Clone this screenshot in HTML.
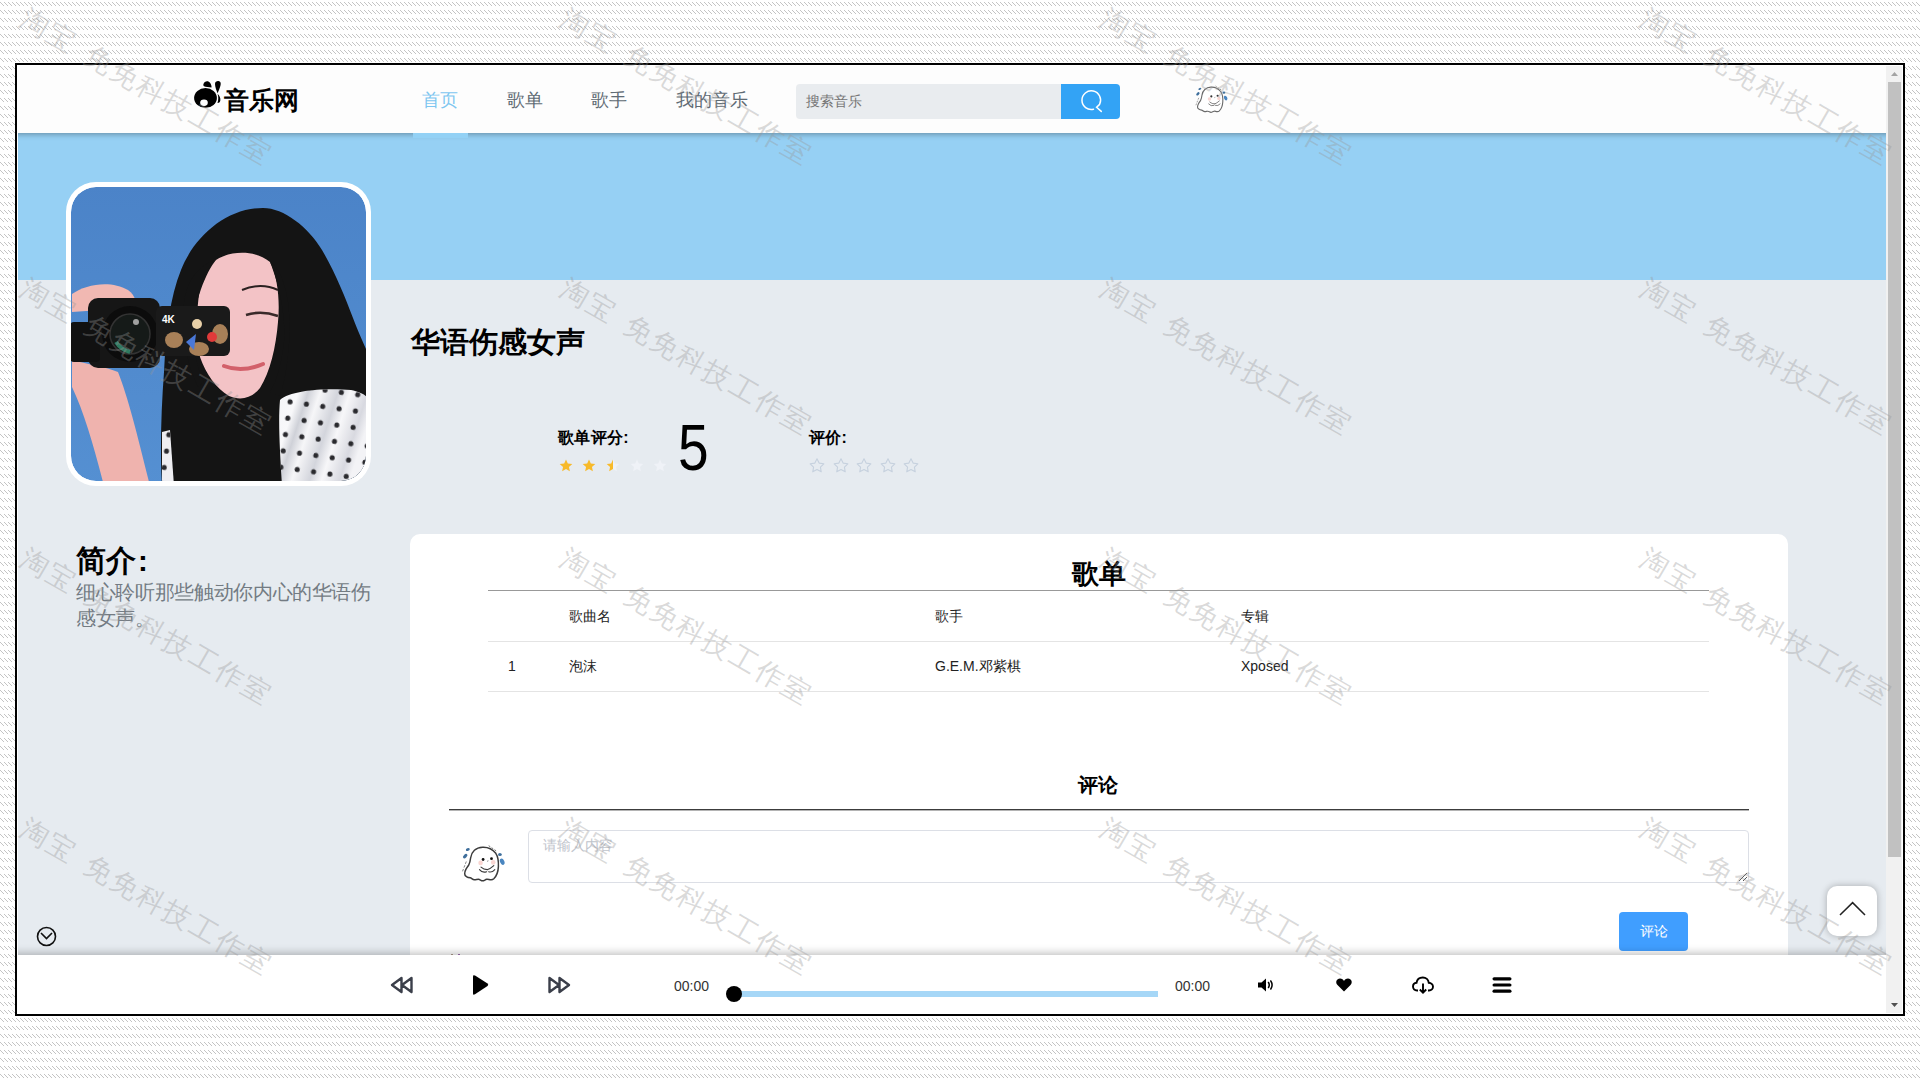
<!DOCTYPE html>
<html><head><meta charset="utf-8">
<style>
*{box-sizing:border-box;margin:0;padding:0}
html,body{width:1920px;height:1080px;overflow:hidden;background:#fff;font-family:"Liberation Sans",sans-serif}
.abs{position:absolute}
.t{position:absolute;white-space:nowrap}
#frame{position:absolute;left:15px;top:63px;width:1890px;height:953px;border:2px solid #000;background:#fff}
#view{position:absolute;left:18px;top:66px;width:1868px;height:947px;overflow:hidden;background:#e6ebf0}
#pg{position:absolute;left:-18px;top:-66px;width:1920px;height:1080px}
#header{position:absolute;left:0;top:0;width:1920px;height:133px;background:#fdfdfd;box-shadow:0 1px 6px rgba(0,0,0,.35);z-index:3}
.nav{position:absolute;top:88px;font-size:18px;line-height:24px;color:#606b74}
#scroll{position:absolute;left:1886px;top:66px;width:16px;height:947px;background:#f1f1f1}
#player{position:absolute;left:0;top:955px;width:1920px;height:125px;background:#fff;box-shadow:0 -2px 8px rgba(0,0,0,.25);z-index:4}
.wm{position:absolute;font-size:28px;line-height:30px;letter-spacing:2.1px;color:rgba(150,150,150,.36);white-space:nowrap;transform-origin:0 0;transform:rotate(30deg);z-index:50}
</style></head><body>
<svg class="abs" style="left:0;top:0" width="1920" height="1080" shape-rendering="crispEdges">
<defs><pattern id="hp" width="4" height="8" patternUnits="userSpaceOnUse">
<rect x="0" y="2" width="1" height="1" fill="#c4c4c4"/><rect x="1" y="3" width="1" height="1" fill="#c4c4c4"/><rect x="2" y="4" width="1" height="1" fill="#c4c4c4"/><rect x="3" y="5" width="1" height="1" fill="#c4c4c4"/>
</pattern></defs>
<rect width="1920" height="1080" fill="url(#hp)"/>
</svg>
<div id="frame"></div>
<div id="view"><div id="pg">
<div id="header">
 <svg class="abs" style="left:185px;top:75px" width="45" height="40" viewBox="0 0 45 40">
  <ellipse cx="20.5" cy="22.9" rx="11.4" ry="9.9" fill="#000"/>
  <ellipse cx="19" cy="27.75" rx="3.8" ry="3.15" fill="#fff"/>
  <path d="M18.5,9 C19.5,5.8 23.5,5.5 25.2,8 C26,9.3 26.8,11 26.5,12.6 C24,12 20.5,12 19,11.2 C18.3,10.6 18.2,9.8 18.5,9 Z" fill="#000"/>
  <path d="M30,9 C30,6.5 32,5.8 33.5,6 C35.5,6.3 36,8 35.6,10 C35,13 33.5,16 32.5,18.2 C31.5,15.5 30,12 30,9 Z" fill="#000"/>
  <path d="M32.6,18.7 C34.5,20.5 35.8,23 35.3,25.8 C34.8,27.5 33.5,28.3 32.5,28 C33.5,25 33.5,21.5 32.6,18.7 Z" fill="#000"/>
 </svg>
 <div class="t" style="left:224px;top:84px;font-size:25px;line-height:32px;font-weight:bold;color:#000">音乐网</div>
 <div class="nav t" style="left:422px;color:#7ec6f0">首页</div>
 <div class="nav t" style="left:507px">歌单</div>
 <div class="nav t" style="left:591px">歌手</div>
 <div class="nav t" style="left:676px">我的音乐</div>
 <div class="abs" style="left:413px;top:133px;width:55px;height:5px;background:#93d1f5"></div>
 <div class="abs" style="left:796px;top:84px;width:265px;height:35px;background:#e9ecef;border-radius:4px 0 0 4px"></div>
 <div class="t" style="left:806px;top:91px;font-size:14px;line-height:20px;color:#757575">搜索音乐</div>
 <div class="abs" style="left:1061px;top:84px;width:59px;height:35px;background:#33a3f5;border-radius:0 4px 4px 0"></div>
 <svg class="abs" style="left:1187.9px;top:78.45px;overflow:visible" width="45" height="42" viewBox="0 0 60 56"><g transform="scale(1)"><path d="M30.6,12.2 C35,12 40,13.5 43.8,18.3 C46,21.5 46.6,27 46.4,31.6 C46.2,36 45,40.5 41.8,43.8 C40.5,45 39.5,44.8 38.7,44.8 C37,44.6 35.8,44 34.6,44.3 C33,44.8 32,45.8 30.6,45.8 C29,45.8 28,44.3 26.5,44.3 C25,44.3 23.8,44.9 22.4,44.8 C20.5,44.7 19.5,43 18.3,42.8 C16.8,42.6 15.6,42.3 14.8,41.8 C13.4,41 12.6,39.8 12.7,38.7 C12.8,36.5 13.3,35.5 14,34.2 C15,32.5 16,31.2 16.8,29.8 C17.8,28 18.3,25.5 18.6,23 C19,20 20,17.5 22.4,15.3 C24.5,13.3 27.5,12.3 30.6,12.2 Z" fill="#fff" stroke="#6a6a6a" stroke-width="1.5"/>
<circle cx="31.1" cy="24.5" r="1.4" fill="#333"/><circle cx="39.5" cy="23.7" r="1.4" fill="#333"/>
<path d="M35,25.8 Q35.7,26.6 36.4,25.8" fill="none" stroke="#555" stroke-width=".7"/>
<circle cx="28.6" cy="27.9" r="2.3" fill="#f9d6d2"/><circle cx="41.2" cy="27.4" r="2.3" fill="#f9d6d2"/>
<path d="M29,32.1 Q32,34.8 35.7,34.6 M27.5,34.6 Q30.5,38.3 34.6,36.7 M41.8,30.6 Q38.5,33.5 35.7,34.6 M42.8,34.6 Q40,37.8 36.7,36.7" fill="none" stroke="#6a6a6a" stroke-width="1.1" stroke-linecap="round"/>
<ellipse cx="15.8" cy="14.5" rx="2" ry="1.4" fill="#3f6f9c" transform="rotate(-20 15.8 14.5)"/>
<ellipse cx="13.2" cy="21.1" rx="2.7" ry="1.6" fill="#3f6f9c" transform="rotate(-45 13.2 21.1)"/>
<ellipse cx="47.9" cy="19.6" rx="1.9" ry="1.5" fill="#3f6f9c"/>
<ellipse cx="50.2" cy="26.7" rx="2.1" ry="3.3" fill="#4a86c0" transform="rotate(-25 50.2 26.7)"/>
<path d="M36.7,10.7 L44.8,16.3" stroke="#666" stroke-width=".9" stroke-dasharray="2 1.5"/>
<path d="M14.3,26.5 L10.2,37.2" stroke="#777" stroke-width=".9" stroke-dasharray="2.5 1.5"/></g></svg>
 <svg class="abs" style="left:1076px;top:85px" width="30" height="30" viewBox="0 0 30 30">
  <path d="M23.7,19.1 A9.3,9.3 0 1 0 17.5,24.2" fill="none" stroke="#fff" stroke-width="1.5" stroke-linecap="round"/>
  <path d="M23.4,19.6 L20.6,22.2 L25.3,26.4" fill="none" stroke="#fff" stroke-width="1.5" stroke-linecap="round" stroke-linejoin="miter"/>
 </svg>
</div>
<div class="abs" style="left:0;top:133px;width:1920px;height:147px;background:#96d0f4"></div>
<div class="abs" style="left:66px;top:182px;width:305px;height:304px;background:#fff;border-radius:30px"></div>
<svg class="abs" style="left:71px;top:187px;border-radius:25px" width="295" height="294" viewBox="5 5 295 294">
 <defs>
  <clipPath id="cc"><rect x="5" y="5" width="295" height="294" rx="25"/></clipPath>
  <pattern id="dots" width="16.5" height="16.5" patternUnits="userSpaceOnUse" patternTransform="rotate(8)">
   <circle cx="5" cy="5" r="2.5" fill="#2a2a2e"/><circle cx="13.25" cy="13.25" r="0" fill="#2a2a2e"/>
  </pattern>
  <linearGradient id="dressg" x1="0" y1="0" x2="1" y2="0.35">
   <stop offset="0" stop-color="#f4f5f8"/><stop offset=".2" stop-color="#f8f8fa"/><stop offset=".3" stop-color="#cfd1d8"/><stop offset=".42" stop-color="#f6f6f8"/><stop offset=".6" stop-color="#d3d5dc"/><stop offset=".72" stop-color="#f7f7f9"/><stop offset=".9" stop-color="#d8d9e0"/><stop offset="1" stop-color="#f3f3f6"/>
  </linearGradient>
  <linearGradient id="bgg" x1="0" y1="0" x2="0" y2="1"><stop offset="0" stop-color="#4b83c8"/><stop offset="1" stop-color="#5590d2"/></linearGradient>
 </defs>
 <g clip-path="url(#cc)">
  <rect x="0" y="0" width="310" height="310" fill="url(#bgg)"/>
  <!-- hair -->
  <path d="M197,26 C218,26 242,45 256,68 C269,90 279,115 287,136 C293,152 299,164 302,172 L302,304 L96,304 C94,270 95,230 98,190 C100,150 104,115 115,88 C128,55 160,26 197,26 Z" fill="#141414"/>
  <!-- face -->
  <path d="M150,78 C165,68 190,68 204,80 C212,95 214,120 212,140 C210,165 204,190 194,206 C186,216 175,219 163,214 C150,206 140,192 134,175 C130,150 130,120 136,98 C139,88 144,82 150,78 Z" fill="#f3c3c6"/>
  <path d="M150,78 C140,90 128,120 126,150 C128,170 132,190 138,200 L132,205 C120,180 115,150 118,120 C122,95 135,82 150,78 Z" fill="#141414"/>
  <path d="M204,80 C212,100 220,130 218,160 C215,185 210,200 204,210 L214,214 C222,190 226,150 222,120 C218,95 210,82 204,80 Z" fill="#141414"/>
  <path d="M180,133 Q195,128 212,134" stroke="#3a2a2a" stroke-width="2.5" fill="none"/>
  <path d="M176,108 Q195,100 212,108" stroke="#2a2020" stroke-width="2" fill="none"/>
  <path d="M158,184 Q176,191 197,182" stroke="#d2606a" stroke-width="4" fill="none" stroke-linecap="round"/>
  <!-- arm -->
  <path d="M6,178 C20,182 40,185 52,190 C62,215 72,255 84,304 L38,304 C28,265 18,230 6,205 Z" fill="#efb3ae"/>
  <path d="M6,112 C20,102 45,98 62,108 C70,114 72,122 64,126 L6,130 Z" fill="#f1b8b2"/>
  <!-- camera -->
  <rect x="22" y="116" width="72" height="70" rx="10" fill="#161616"/>
  <rect x="4" y="140" width="30" height="40" rx="4" fill="#111"/>
  <circle cx="64" cy="152" r="28" fill="#0c0c0c"/>
  <circle cx="64" cy="152" r="20" fill="#151a18" stroke="#333" stroke-width="1.5"/>
  <path d="M50,160 Q55,168 64,170" stroke="#2f7a60" stroke-width="4" fill="none"/>
  <circle cx="70" cy="140" r="3" fill="#a0a0a0"/>
  <rect x="90" y="124" width="74" height="50" rx="6" fill="#1a1a1a"/>
  <text x="96" y="141" font-size="10" font-weight="bold" fill="#fff" font-family="Liberation Sans">4K</text>
  <ellipse cx="108" cy="158" rx="9" ry="8" fill="#a88058"/>
  <ellipse cx="133" cy="167" rx="10" ry="7" fill="#a88058"/>
  <ellipse cx="154" cy="152" rx="8" ry="10" fill="#a88058"/>
  <circle cx="146" cy="155" r="5" fill="#e03a3a"/>
  <path d="M120,160 L130,152 L128,168 Z" fill="#4a78d8"/>
  <circle cx="131" cy="142" r="5" fill="#e8d0a8"/>
  <!-- dress -->
  <path id="dr" d="M214,218 C225,208 260,206 285,208 C295,210 302,214 302,218 L302,304 L216,304 C214,270 212,240 214,218 Z" fill="url(#dressg)"/><path d="M214,218 C225,208 260,206 285,208 C295,210 302,214 302,218 L302,304 L216,304 C214,270 212,240 214,218 Z" fill="url(#dots)"/>
  <path d="M96,250 L104,248 L108,304 L96,304 Z" fill="#eeeef2"/><path d="M96,250 L104,248 L108,304 L96,304 Z" fill="url(#dots)"/>
 </g>
</svg>
<div class="t" style="left:411px;top:324px;font-size:29px;line-height:36px;font-weight:bold;color:#000">华语伤感女声</div>
<div class="t" style="left:558px;top:427px;font-size:16px;line-height:22px;font-weight:bold;color:#000;letter-spacing:.3px">歌单评分:</div>
<div class="t" style="left:678px;top:411px;font-size:64px;line-height:74px;color:#000;transform:scaleX(.86);transform-origin:0 0;-webkit-text-stroke:0px">5</div>
<div class="t" style="left:809px;top:427px;font-size:16px;line-height:22px;font-weight:bold;color:#000;letter-spacing:.3px">评价:</div>
<svg class="abs" style="left:558.8px;top:459px" width="14" height="14"><path d="M7.00,0.40 L8.82,4.49 L13.28,4.96 L9.95,7.96 L10.88,12.34 L7.00,10.10 L3.12,12.34 L4.05,7.96 L0.72,4.96 L5.18,4.49 Z" fill="#f7ba2a"/></svg>
<svg class="abs" style="left:582.4px;top:459px" width="14" height="14"><path d="M7.00,0.40 L8.82,4.49 L13.28,4.96 L9.95,7.96 L10.88,12.34 L7.00,10.10 L3.12,12.34 L4.05,7.96 L0.72,4.96 L5.18,4.49 Z" fill="#f7ba2a"/></svg>
<svg class="abs" style="left:606.0px;top:459px" width="14" height="14"><defs><clipPath id="hc"><rect x="0" y="0" width="7" height="14"/></clipPath></defs><path d="M7.00,0.40 L8.82,4.49 L13.28,4.96 L9.95,7.96 L10.88,12.34 L7.00,10.10 L3.12,12.34 L4.05,7.96 L0.72,4.96 L5.18,4.49 Z" fill="#eff2f7"/><path d="M7.00,0.40 L8.82,4.49 L13.28,4.96 L9.95,7.96 L10.88,12.34 L7.00,10.10 L3.12,12.34 L4.05,7.96 L0.72,4.96 L5.18,4.49 Z" fill="#f7ba2a" clip-path="url(#hc)"/></svg>
<svg class="abs" style="left:629.6px;top:459px" width="14" height="14"><path d="M7.00,0.40 L8.82,4.49 L13.28,4.96 L9.95,7.96 L10.88,12.34 L7.00,10.10 L3.12,12.34 L4.05,7.96 L0.72,4.96 L5.18,4.49 Z" fill="#eff2f7"/></svg>
<svg class="abs" style="left:653.2px;top:459px" width="14" height="14"><path d="M7.00,0.40 L8.82,4.49 L13.28,4.96 L9.95,7.96 L10.88,12.34 L7.00,10.10 L3.12,12.34 L4.05,7.96 L0.72,4.96 L5.18,4.49 Z" fill="#eff2f7"/></svg>
<svg class="abs" style="left:809.0px;top:458px" width="16" height="16"><path d="M8.00,0.80 L10.12,5.09 L14.85,5.78 L11.42,9.11 L12.23,13.82 L8.00,11.60 L3.77,13.82 L4.58,9.11 L1.15,5.78 L5.88,5.09 Z" fill="none" stroke="#c6d1de" stroke-width="1.1" stroke-linejoin="round"/></svg>
<svg class="abs" style="left:832.6px;top:458px" width="16" height="16"><path d="M8.00,0.80 L10.12,5.09 L14.85,5.78 L11.42,9.11 L12.23,13.82 L8.00,11.60 L3.77,13.82 L4.58,9.11 L1.15,5.78 L5.88,5.09 Z" fill="none" stroke="#c6d1de" stroke-width="1.1" stroke-linejoin="round"/></svg>
<svg class="abs" style="left:856.2px;top:458px" width="16" height="16"><path d="M8.00,0.80 L10.12,5.09 L14.85,5.78 L11.42,9.11 L12.23,13.82 L8.00,11.60 L3.77,13.82 L4.58,9.11 L1.15,5.78 L5.88,5.09 Z" fill="none" stroke="#c6d1de" stroke-width="1.1" stroke-linejoin="round"/></svg>
<svg class="abs" style="left:879.8px;top:458px" width="16" height="16"><path d="M8.00,0.80 L10.12,5.09 L14.85,5.78 L11.42,9.11 L12.23,13.82 L8.00,11.60 L3.77,13.82 L4.58,9.11 L1.15,5.78 L5.88,5.09 Z" fill="none" stroke="#c6d1de" stroke-width="1.1" stroke-linejoin="round"/></svg>
<svg class="abs" style="left:903.4px;top:458px" width="16" height="16"><path d="M8.00,0.80 L10.12,5.09 L14.85,5.78 L11.42,9.11 L12.23,13.82 L8.00,11.60 L3.77,13.82 L4.58,9.11 L1.15,5.78 L5.88,5.09 Z" fill="none" stroke="#c6d1de" stroke-width="1.1" stroke-linejoin="round"/></svg>

<div class="t" style="left:76px;top:543px;font-size:29.5px;line-height:36px;font-weight:bold;color:#000">简介</div><div class="t" style="left:138px;top:543px;font-size:29.5px;line-height:36px;font-weight:bold;color:#000">:</div>
<div class="abs" style="left:76px;top:579px;width:300px;font-size:20px;letter-spacing:-.35px;line-height:26px;color:#737b83">细心聆听那些触动你内心的华语伤感女声。</div>
<!-- card -->
<div class="abs" style="left:410px;top:534px;width:1378px;height:500px;background:#fff;border-radius:10px"></div>
<div class="t" style="left:1072px;top:558px;font-size:27px;line-height:33px;font-weight:bold;color:#000">歌单</div>
<div class="abs" style="left:488px;top:590px;width:1221px;height:1px;background:#999"></div>
<div class="t" style="left:569px;top:606px;font-size:14px;line-height:20px;color:#222">歌曲名</div>
<div class="t" style="left:935px;top:606px;font-size:14px;line-height:20px;color:#222">歌手</div>
<div class="t" style="left:1241px;top:606px;font-size:14px;line-height:20px;color:#222">专辑</div>
<div class="abs" style="left:488px;top:641px;width:1221px;height:1px;background:#e4e4e4"></div>
<div class="t" style="left:508px;top:656px;font-size:14px;line-height:20px;color:#222">1</div>
<div class="t" style="left:569px;top:656px;font-size:14px;line-height:20px;color:#222">泡沫</div>
<div class="t" style="left:935px;top:656px;font-size:14px;line-height:20px;color:#222">G.E.M.邓紫棋</div>
<div class="t" style="left:1241px;top:656px;font-size:14px;line-height:20px;color:#222">Xposed</div>
<div class="abs" style="left:488px;top:691px;width:1221px;height:1px;background:#e4e4e4"></div>
<div class="t" style="left:1078px;top:772px;font-size:20px;line-height:26px;font-weight:bold;color:#000">评论</div>
<div class="abs" style="left:449px;top:809px;width:1300px;height:2px;background:linear-gradient(#3c3c3c 50%,#b4b4b4 50%)"></div>
<svg class="abs" style="left:452px;top:835px;overflow:visible" width="60" height="56" viewBox="0 0 60 56"><path d="M30.6,12.2 C35,12 40,13.5 43.8,18.3 C46,21.5 46.6,27 46.4,31.6 C46.2,36 45,40.5 41.8,43.8 C40.5,45 39.5,44.8 38.7,44.8 C37,44.6 35.8,44 34.6,44.3 C33,44.8 32,45.8 30.6,45.8 C29,45.8 28,44.3 26.5,44.3 C25,44.3 23.8,44.9 22.4,44.8 C20.5,44.7 19.5,43 18.3,42.8 C16.8,42.6 15.6,42.3 14.8,41.8 C13.4,41 12.6,39.8 12.7,38.7 C12.8,36.5 13.3,35.5 14,34.2 C15,32.5 16,31.2 16.8,29.8 C17.8,28 18.3,25.5 18.6,23 C19,20 20,17.5 22.4,15.3 C24.5,13.3 27.5,12.3 30.6,12.2 Z" fill="#fff" stroke="#3c3c3c" stroke-width="1.5"/>
<circle cx="31.1" cy="24.5" r="1.4" fill="#111"/><circle cx="39.5" cy="23.7" r="1.4" fill="#111"/>
<path d="M35,25.8 Q35.7,26.6 36.4,25.8" fill="none" stroke="#555" stroke-width=".7"/>
<circle cx="28.6" cy="27.9" r="2.3" fill="#f9d6d2"/><circle cx="41.2" cy="27.4" r="2.3" fill="#f9d6d2"/>
<path d="M29,32.1 Q32,34.8 35.7,34.6 M27.5,34.6 Q30.5,38.3 34.6,36.7 M41.8,30.6 Q38.5,33.5 35.7,34.6 M42.8,34.6 Q40,37.8 36.7,36.7" fill="none" stroke="#3c3c3c" stroke-width="1.1" stroke-linecap="round"/>
<ellipse cx="15.8" cy="14.5" rx="2" ry="1.4" fill="#3f6f9c" transform="rotate(-20 15.8 14.5)"/>
<ellipse cx="13.2" cy="21.1" rx="2.7" ry="1.6" fill="#3f6f9c" transform="rotate(-45 13.2 21.1)"/>
<ellipse cx="47.9" cy="19.6" rx="1.9" ry="1.5" fill="#3f6f9c"/>
<ellipse cx="50.2" cy="26.7" rx="2.1" ry="3.3" fill="#4a86c0" transform="rotate(-25 50.2 26.7)"/>
<path d="M36.7,10.7 L44.8,16.3" stroke="#666" stroke-width=".9" stroke-dasharray="2 1.5"/>
<path d="M14.3,26.5 L10.2,37.2" stroke="#777" stroke-width=".9" stroke-dasharray="2.5 1.5"/></svg>
<div class="abs" style="left:528px;top:830px;width:1221px;height:53px;border:1px solid #dcdfe6;border-radius:4px;background:#fff"></div>
<div class="t" style="left:543px;top:835px;font-size:14px;line-height:20px;color:#c0c4cc">请输入内容</div>
<svg class="abs" style="left:1738px;top:872px" width="10" height="10"><path d="M1 9 L9 1 M5 9 L9 5" stroke="#555" stroke-width="1"/></svg>
<div class="abs" style="left:1619px;top:912px;width:69px;height:39px;background:#409eff;border-radius:4px"></div>
<div class="t" style="left:1640px;top:921px;font-size:14px;line-height:20px;color:#fff">评论</div>
<svg class="abs" style="left:36px;top:926px" width="21" height="21" viewBox="0 0 21 21"><circle cx="10.5" cy="10.5" r="9" fill="none" stroke="#111" stroke-width="1.6"/><path d="M5 7 L10.5 12.6 L16 7" fill="none" stroke="#111" stroke-width="1.6"/></svg>
<div class="abs" style="left:1827px;top:886px;width:50px;height:50px;background:#fff;border-radius:10px;box-shadow:0 0 7px rgba(0,0,0,.28);z-index:2"></div>
<svg class="abs" style="left:1827px;top:886px;z-index:2" width="50" height="50"><path d="M13 29 L25.6 16.6 L38 29" fill="none" stroke="#222" stroke-width="1.5"/></svg>

<div class="abs" style="left:451px;top:954px;width:2px;height:1px;background:#8a7a6a;z-index:5;border-radius:1px"></div><div class="abs" style="left:458px;top:954px;width:2px;height:1px;background:#7a4a8a;z-index:5;border-radius:1px"></div>
<div id="player">
 <svg class="abs" style="left:389px;top:20px" width="26" height="20" viewBox="0 0 26 20"><path d="M12.5 3 L3 10 L12.5 17 Z M22.5 3 L13 10 L22.5 17 Z" fill="none" stroke="#3b3f4a" stroke-width="2.4" stroke-linejoin="round"/></svg>
 <svg class="abs" style="left:469px;top:18px" width="22" height="24" viewBox="0 0 22 24"><path d="M4 3.5 Q4 1.5 6 2.6 L18.5 10.6 Q20 11.8 18.5 13 L6 21.2 Q4 22.4 4 20.4 Z" fill="#000"/></svg>
 <svg class="abs" style="left:546px;top:20px" width="26" height="20" viewBox="0 0 26 20"><path d="M3.5 3 L13 10 L3.5 17 Z M13.5 3 L23 10 L13.5 17 Z" fill="none" stroke="#3b3f4a" stroke-width="2.4" stroke-linejoin="round"/></svg>
 <div class="t" style="left:674px;top:22px;font-size:14px;line-height:18px;color:#333">00:00</div>
 <div class="abs" style="left:734px;top:36px;width:424px;height:6px;background:#a6d7f7"></div>
 <div class="abs" style="left:726px;top:31px;width:16px;height:16px;border-radius:50%;background:#000"></div>
 <div class="t" style="left:1175px;top:22px;font-size:14px;line-height:18px;color:#333">00:00</div>
 <svg class="abs" style="left:1256px;top:21px" width="20" height="18" viewBox="0 0 20 18"><path d="M2 6.5 L5.5 6.5 L10 2.5 L10 15.5 L5.5 11.5 L2 11.5 Z" fill="#000"/><path d="M12.5 6.5 Q14 9 12.5 11.5 M14.8 5 Q17.4 9 14.8 13" fill="none" stroke="#000" stroke-width="1.5" stroke-linecap="round"/></svg>
 <svg class="abs" style="left:1334px;top:21px" width="20" height="18" viewBox="0 0 20 18"><path d="M10 15.5 L3.5 9 C1 6.5 2.5 2.5 6 2.5 C8 2.5 9.3 3.8 10 5 C10.7 3.8 12 2.5 14 2.5 C17.5 2.5 19 6.5 16.5 9 Z" fill="#000"/></svg>
 <svg class="abs" style="left:1411px;top:20px" width="24" height="20" viewBox="0 0 24 20"><path d="M7 15.5 L6 15.5 C3.5 15.5 2 13.7 2 11.6 C2 9.6 3.5 8 5.5 7.8 C6 4.6 8.6 2.5 11.8 2.5 C15 2.5 17.4 4.8 17.8 7.8 C20 8 22 9.6 22 11.8 C22 13.8 20.4 15.5 18 15.5 L17 15.5" fill="none" stroke="#000" stroke-width="1.9"/><path d="M12 8.5 L12 17.5 M8.8 14.5 L12 17.6 L15.2 14.5" fill="none" stroke="#000" stroke-width="1.9"/></svg>
 <svg class="abs" style="left:1490px;top:20px" width="24" height="20" viewBox="0 0 24 20"><rect x="2.5" y="2.2" width="19" height="3.2" rx="1.6" fill="#000"/><rect x="2.5" y="8.4" width="19" height="3.2" rx="1.6" fill="#000"/><rect x="2.5" y="14.6" width="19" height="3.2" rx="1.6" fill="#000"/></svg>
</div>
</div></div>
<div id="scroll">
 <div class="abs" style="left:2px;top:16px;width:13px;height:775px;background:#c1c1c1"></div>
 <svg class="abs" style="left:0;top:0" width="16" height="16"><path d="M5 10 L8.5 6 L12 10 Z" fill="#a3a3a3"/></svg>
 <svg class="abs" style="left:0;top:931px" width="16" height="16"><path d="M5 6 L12 6 L8.5 10 Z" fill="#505050"/></svg>
</div>
<div class="wm" style="left:30.3px;top:3.3px">淘宝<span style="margin-left:14px">免免科技工作室</span></div>
<div class="wm" style="left:570.4px;top:3.3px">淘宝<span style="margin-left:14px">免免科技工作室</span></div>
<div class="wm" style="left:1110.4px;top:3.3px">淘宝<span style="margin-left:14px">免免科技工作室</span></div>
<div class="wm" style="left:1650.4px;top:3.3px">淘宝<span style="margin-left:14px">免免科技工作室</span></div>
<div class="wm" style="left:30.3px;top:273.3px">淘宝<span style="margin-left:14px">免免科技工作室</span></div>
<div class="wm" style="left:570.4px;top:273.3px">淘宝<span style="margin-left:14px">免免科技工作室</span></div>
<div class="wm" style="left:1110.4px;top:273.3px">淘宝<span style="margin-left:14px">免免科技工作室</span></div>
<div class="wm" style="left:1650.4px;top:273.3px">淘宝<span style="margin-left:14px">免免科技工作室</span></div>
<div class="wm" style="left:30.3px;top:543.3px">淘宝<span style="margin-left:14px">免免科技工作室</span></div>
<div class="wm" style="left:570.4px;top:543.3px">淘宝<span style="margin-left:14px">免免科技工作室</span></div>
<div class="wm" style="left:1110.4px;top:543.3px">淘宝<span style="margin-left:14px">免免科技工作室</span></div>
<div class="wm" style="left:1650.4px;top:543.3px">淘宝<span style="margin-left:14px">免免科技工作室</span></div>
<div class="wm" style="left:30.3px;top:813.3px">淘宝<span style="margin-left:14px">免免科技工作室</span></div>
<div class="wm" style="left:570.4px;top:813.3px">淘宝<span style="margin-left:14px">免免科技工作室</span></div>
<div class="wm" style="left:1110.4px;top:813.3px">淘宝<span style="margin-left:14px">免免科技工作室</span></div>
<div class="wm" style="left:1650.4px;top:813.3px">淘宝<span style="margin-left:14px">免免科技工作室</span></div>

</body></html>
